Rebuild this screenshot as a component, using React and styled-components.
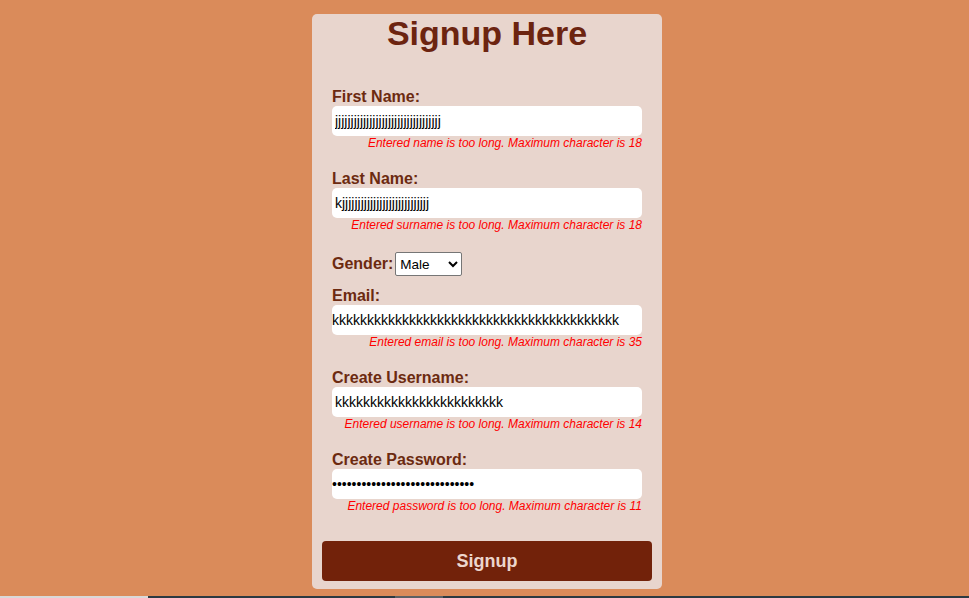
import React, { useState } from "react";
import styled, { createGlobalStyle } from "styled-components";

const GlobalStyle = createGlobalStyle`
  html, body {
    margin: 0;
    padding: 0;
    background-color: #da8b5a;
    font-family: "Liberation Sans", Arial, sans-serif;
  }
`;

const Page = styled.div`
  display: flex;
  flex-direction: column;
  min-height: 100vh;
`;

const Main = styled.div`
  flex: 1;
  display: flex;
  justify-content: center;
  align-items: flex-start;
  padding: 14px 0 0 5px;
`;

const Card = styled.form`
  width: 350px;
  box-sizing: border-box;
  background-color: #e8d5cd;
  border-radius: 5px;
  padding: 0 10px 8px;
  display: flex;
  flex-direction: column;
`;

const Title = styled.h1`
  margin: 0 0 35px;
  font-size: 34px;
  line-height: 39px;
  font-weight: bold;
  text-align: center;
  color: #6c2410;
`;

const Fields = styled.div`
  padding: 0 10px;
  display: flex;
  flex-direction: column;
`;

const Field = styled.div`
  display: flex;
  flex-direction: ${(props) => (props.$inline ? "row" : "column")};
  align-items: ${(props) => (props.$inline ? "baseline" : "stretch")};
  margin-bottom: ${(props) => (props.$inline ? "11px" : "10px")};
`;

const Label = styled.label`
  display: block;
  font-size: 16px;
  line-height: 18px;
  font-weight: bold;
  color: #6c2a10;
`;

const Input = styled.input`
  display: block;
  width: 100%;
  height: 30px;
  box-sizing: border-box;
  border: none;
  border-radius: 5px;
  background-color: #ffffff;
  padding: 0 3px 0 ${(props) => (props.$flush ? "0" : "3px")};
  font-family: "Liberation Sans", Arial, sans-serif;
  font-size: 14px;
  color: #000000;
  outline: none;
`;

const Error = styled.div`
  text-align: right;
  font-size: 12px;
  line-height: 14px;
  font-style: italic;
  color: #ff0000;
  margin-bottom: 10px;
`;

const Select = styled.select`
  width: 67px;
  height: 24px;
  margin-left: 2px;
  border: 1px solid #767676;
  border-radius: 2px;
  background-color: #ffffff;
  font-family: "Liberation Sans", Arial, sans-serif;
  font-size: 13.5px;
  color: #000000;
`;

const SubmitButton = styled.button`
  margin-top: 8px;
  height: 40px;
  border: none;
  border-radius: 4px;
  background-color: #72220a;
  color: #ecd6cd;
  font-family: "Liberation Sans", Arial, sans-serif;
  font-size: 18px;
  font-weight: bold;
  cursor: pointer;
`;

const Strip = styled.div`
  display: flex;
  height: 2px;
`;

const StripPart = styled.div`
  width: ${(props) => props.$w || "auto"};
  flex: ${(props) => (props.$w ? "none" : "1")};
  background-color: ${(props) => props.$color};
`;

const fields = [
  {
    id: "first",
    label: "First Name:",
    value: "j".repeat(34),
    error: "Entered name is too long. Maximum character is 18",
  },
  {
    id: "last",
    label: "Last Name:",
    value: "k" + "j".repeat(28),
    error: "Entered surname is too long. Maximum character is 18",
  },
];

const moreFields = [
  {
    id: "email",
    label: "Email:",
    value: "k".repeat(41),
    flush: true,
    error: "Entered email is too long. Maximum character is 35",
  },
  {
    id: "username",
    label: "Create Username:",
    value: "k".repeat(24),
    error: "Entered username is too long. Maximum character is 14",
  },
  {
    id: "password",
    label: "Create Password:",
    value: "p".repeat(29),
    type: "password",
    flush: true,
    error: "Entered password is too long. Maximum character is 11",
  },
];

function TextField({ f, values, setValue }) {
  return (
    <Field>
      <Label htmlFor={f.id}>{f.label}</Label>
      <Input
        id={f.id}
        type={f.type || "text"}
        $flush={f.flush}
        value={values[f.id]}
        onChange={(e) => setValue(f.id, e.target.value)}
      />
      <Error>{f.error}</Error>
    </Field>
  );
}

function App() {
  const [values, setValues] = useState(() => {
    const v = {};
    [...fields, ...moreFields].forEach((f) => (v[f.id] = f.value));
    return v;
  });
  const [gender, setGender] = useState("Male");

  const setValue = (id, val) => setValues((prev) => ({ ...prev, [id]: val }));

  return (
    <Page>
      <GlobalStyle />
      <Main>
        <Card onSubmit={(e) => e.preventDefault()}>
          <Title>Signup Here</Title>
          <Fields>
            {fields.map((f) => (
              <TextField key={f.id} f={f} values={values} setValue={setValue} />
            ))}
            <Field $inline>
              <Label htmlFor="gender">Gender:</Label>
              <Select
                id="gender"
                value={gender}
                onChange={(e) => setGender(e.target.value)}
              >
                <option>Male</option>
                <option>Female</option>
                <option>Other</option>
              </Select>
            </Field>
            {moreFields.map((f) => (
              <TextField key={f.id} f={f} values={values} setValue={setValue} />
            ))}
          </Fields>
          <SubmitButton type="submit">Signup</SubmitButton>
        </Card>
      </Main>
      <Strip>
        <StripPart $w="148px" $color="#d9d9d9" />
        <StripPart $w="247px" $color="#2b3a42" />
        <StripPart $w="48px" $color="#5b6064" />
        <StripPart $color="#2b3a42" />
      </Strip>
    </Page>
  );
}

export default App;
